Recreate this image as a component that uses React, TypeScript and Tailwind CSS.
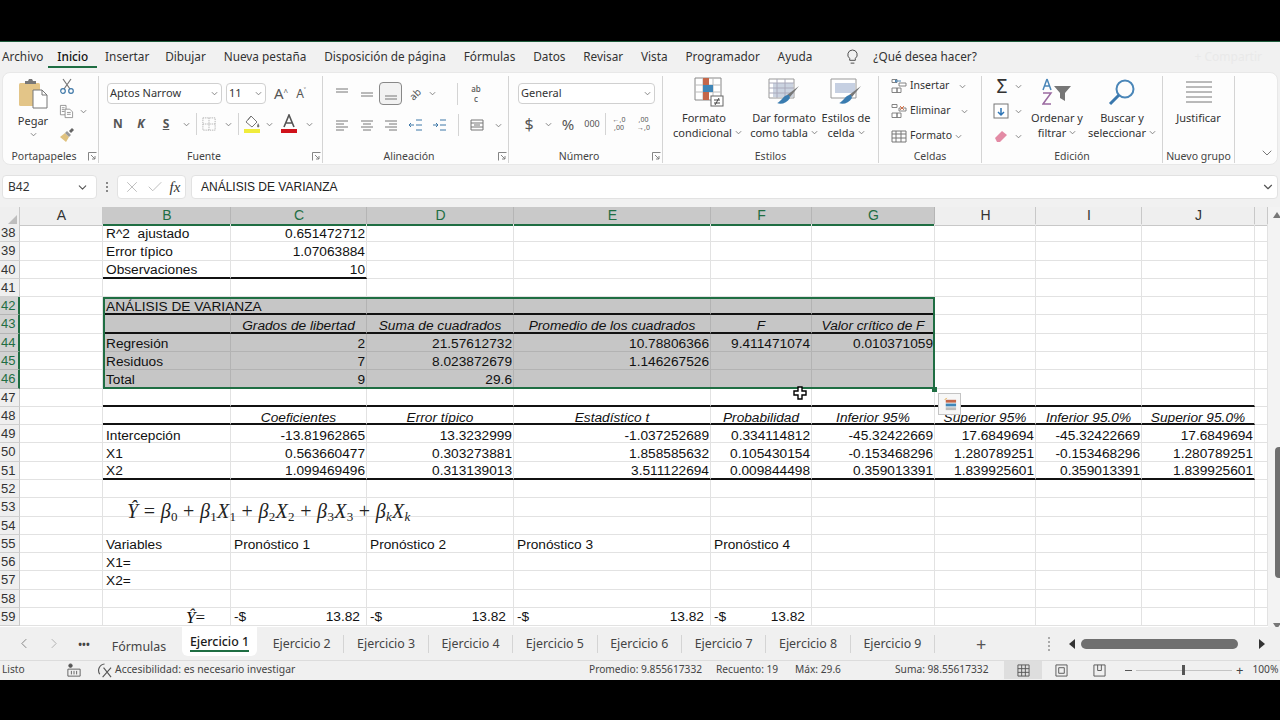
import React from "react";
import { X, Check, ChevronDown } from "lucide-react";

const cols = ["A", "B", "C", "D", "E", "F", "G", "H", "I", "J", "K"];
const colWidths = "grid-cols-[20px_83px_128px_136px_147px_197px_101px_123px_101px_106px_113px_13px]";

type Cell = { t: React.ReactNode; a?: "l" | "r" | "c"; i?: boolean };
const r = (t: React.ReactNode): Cell => ({ t, a: "r" });
const h = (t: string): Cell => ({ t, a: "c", i: true });
const l = (t: React.ReactNode): Cell => ({ t, a: "l" });

const money = (pad: string) => (
  <span className={`flex w-full justify-between ${pad}`}>
    <span>-$</span>
    <span>13.82</span>
  </span>
);

const data: Record<number, Record<string, Cell>> = {
  38: { B: l("R^2  ajustado"), C: r("0.651472712") },
  39: { B: l("Error típico"), C: r("1.07063884") },
  40: { B: l("Observaciones"), C: r("10") },
  42: { B: l("ANÁLISIS DE VARIANZA") },
  43: { C: h("Grados de libertad"), D: h("Suma de cuadrados"), E: h("Promedio de los cuadrados"), F: h("F"), G: h("Valor crítico de F") },
  44: { B: l("Regresión"), C: r("2"), D: r("21.57612732"), E: r("10.78806366"), F: r("9.411471074"), G: r("0.010371059") },
  45: { B: l("Residuos"), C: r("7"), D: r("8.023872679"), E: r("1.146267526") },
  46: { B: l("Total"), C: r("9"), D: r("29.6") },
  48: { C: h("Coeficientes"), D: h("Error típico"), E: h("Estadístico t"), F: h("Probabilidad"), G: h("Inferior 95%"), H: h("Superior 95%"), I: h("Inferior 95.0%"), J: h("Superior 95.0%") },
  49: { B: l("Intercepción"), C: r("-13.81962865"), D: r("13.3232999"), E: r("-1.037252689"), F: r("0.334114812"), G: r("-45.32422669"), H: r("17.6849694"), I: r("-45.32422669"), J: r("17.6849694") },
  50: { B: l("X1"), C: r("0.563660477"), D: r("0.303273881"), E: r("1.858585632"), F: r("0.105430154"), G: r("-0.153468296"), H: r("1.280789251"), I: r("-0.153468296"), J: r("1.280789251") },
  51: { B: l("X2"), C: r("1.099469496"), D: r("0.313139013"), E: r("3.511122694"), F: r("0.009844498"), G: r("0.359013391"), H: r("1.839925601"), I: r("0.359013391"), J: r("1.839925601") },
  55: { B: l("Variables"), C: l("Pronóstico 1"), D: l("Pronóstico 2"), E: l("Pronóstico 3"), F: l("Pronóstico 4") },
  56: { B: l("X1=") },
  57: { B: l("X2=") },
  59: {
    B: { t: <span className="mr-[24px] font-['Liberation_Serif',serif] text-[17px] leading-[17px]"><i>Ŷ</i>=</span>, a: "r" },
    C: l(money("pr-[6px]")),
    D: l(money("pr-[7px]")),
    E: l(money("pr-[6px]")),
    F: l(money("pr-[6px]")),
  },
};

const thick: Record<number, string[]> = {
  40: ["B", "C"],
  42: ["B", "C", "D", "E", "F", "G"],
  43: ["B", "C", "D", "E", "F", "G"],
  47: ["B", "C", "D", "E", "F", "G", "H", "I", "J"],
  48: ["B", "C", "D", "E", "F", "G", "H", "I", "J"],
  51: ["B", "C", "D", "E", "F", "G", "H", "I", "J"],
};

const selCols = ["B", "C", "D", "E", "F", "G"];
const rowNums = Array.from({ length: 22 }, (_, i) => 38 + i);
const sheets = ["Ejercicio 2", "Ejercicio 3", "Ejercicio 4", "Ejercicio 5", "Ejercicio 6", "Ejercicio 7", "Ejercicio 8", "Ejercicio 9"];
const tabs = ["Insertar", "Dibujar", "Nueva pestaña", "Disposición de página", "Fórmulas", "Datos", "Revisar", "Vista", "Programador", "Ayuda"];

const rowPad = (n: number) => {
  if (n === 43) return "pt-[5px]";
  if (n === 48) return "pt-[7px]";
  if (n === 49) return "pt-[4px]";
  if (n === 59) return "pt-px";
  return "pt-[3px]";
};

const Chev = ({ className = "" }: { className?: string }) => (
  <svg viewBox="0 0 8 5" className={`h-[5px] w-[7px] shrink-0 ${className}`} fill="none" stroke="#777" strokeWidth="1">
    <path d="M1 1l3 3 3-3" />
  </svg>
);

const Launcher = () => (
  <svg viewBox="0 0 9 9" className="absolute right-[1px] top-[3px] h-[9px] w-[9px]" fill="none" stroke="#777" strokeWidth="0.9">
    <path d="M.5 8.5v-8h8M3 3l4 4M7 4v3H4" />
  </svg>
);

const Group = ({ w, label, launcher, children }: { w: string; label: string; launcher?: boolean; children: React.ReactNode }) => (
  <div className={`flex h-[87px] shrink-0 flex-col border-r border-[#d4d4d4] ${w}`}>
    <div className="h-[73px]">{children}</div>
    <div className={`relative h-[14px] text-center text-[10.5px] leading-[14px] text-[#444] ${launcher ? "pr-[13px]" : ""}`}>
      {label}
      {launcher && <Launcher />}
    </div>
  </div>
);

const Lines = ({ d, stroke = "#777" }: { d: string; stroke?: string }) => (
  <svg viewBox="0 0 16 16" className="h-[16px] w-[16px]" fill="none" stroke={stroke} strokeWidth="1">
    <path d={d} />
  </svg>
);

const Slot = ({ w, children }: { w: string; children?: React.ReactNode }) => (
  <div className={`flex h-full shrink-0 items-center justify-center ${w}`}>{children}</div>
);

const Sep = ({ className = "" }: { className?: string }) => <div className={`h-[22px] w-px shrink-0 bg-[#d4d4d4] ${className}`} />;

const BigBtn = ({ w, icon, lines }: { w: string; icon: React.ReactNode; lines: React.ReactNode[] }) => (
  <div className={`flex shrink-0 flex-col items-center ${w}`}>
    <div className="flex h-[32px] items-center justify-center">{icon}</div>
    <div className="mt-[2px] text-center text-[11px] leading-[15px] text-[#333]">
      {lines.map((x, i) => (
        <div key={i} className="flex items-center justify-center gap-[3px] whitespace-nowrap">{x}</div>
      ))}
    </div>
  </div>
);

const PasteIcon = () => (
  <svg viewBox="0 0 30 32" className="h-[32px] w-[30px]">
    <rect x="1" y="5" width="21" height="23" rx="1.5" fill="#e3c588" />
    <path d="M7 6V3h3l1-2h3l1 2h3v3z" fill="#777" />
    <path d="M15 12h9l5 5v13H15z" fill="#fff" stroke="#777" />
    <path d="M24 12v5h5" fill="none" stroke="#777" />
  </svg>
);
const CutIcon = () => (
  <svg viewBox="0 0 16 16" className="h-[16px] w-[16px]" fill="none" strokeWidth="1.2">
    <path d="M4 1l7 10M12 1L5 11" stroke="#777" />
    <circle cx="4" cy="13" r="2.3" stroke="#3f78a8" />
    <circle cx="12" cy="13" r="2.3" stroke="#3f78a8" />
  </svg>
);
const CopyIcon = () => (
  <svg viewBox="0 0 16 16" className="h-[15px] w-[15px]" fill="#fff" stroke="#888" strokeWidth="0.9">
    <path d="M1.5 1.5h6v10h-6zM3 4h3M3 6h3M3 8h3" />
    <path d="M6.5 5.5h5l3 3v6h-8zM8.5 9h4M8.5 11h4" />
  </svg>
);
const BrushIcon = () => (
  <svg viewBox="0 0 16 16" className="h-[16px] w-[16px]">
    <path d="M1 10l5-4 4 4-3 5z" fill="#e0c27f" />
    <path d="M6 6l2-2 4 4-2 2z" fill="#999" />
    <path d="M10 4l3-3 2 2-3 3z" fill="#666" />
  </svg>
);
const FillIcon = () => (
  <svg viewBox="0 0 18 20" className="h-[20px] w-[18px]">
    <path d="M8 2l6 6-5 5-6-5z" fill="#fff" stroke="#777" />
    <path d="M5 6l3-4" stroke="#777" fill="none" />
    <path d="M15 9c1 2 2 3 1 4s-2 0-2-1z" fill="#777" />
    <rect x="1" y="15" width="16" height="4" fill="#f0ec3c" />
  </svg>
);
const FontColorIcon = () => (
  <svg viewBox="0 0 18 20" className="h-[20px] w-[18px]">
    <path d="M4 13L9 1l5 12M6 9h6" fill="none" stroke="#555" strokeWidth="1.6" />
    <rect x="1" y="15" width="16" height="4" fill="#d0121b" />
  </svg>
);
const BordersIcon = () => (
  <svg viewBox="0 0 16 16" className="h-[14px] w-[14px]" fill="none" stroke="#aaa" strokeDasharray="1.5 1">
    <path d="M1 1h14v14H1zM8 1v14M1 8h14" />
  </svg>
);
const CondIcon = () => (
  <svg viewBox="0 0 30 30" className="ml-[10px] h-[30px] w-[30px]">
    <path d="M1 1h26v22H1z" fill="#fff" stroke="#888" />
    <path d="M1 8h26M1 15h26M9 1v22M19 1v22" stroke="#bbb" />
    <rect x="9" y="1" width="6" height="7" fill="#c4674a" />
    <rect x="9" y="8" width="10" height="7" fill="#3f86b8" />
    <rect x="9" y="15" width="6" height="8" fill="#c4674a" />
    <rect x="17" y="19" width="12" height="10" fill="#fff" stroke="#666" />
    <path d="M20 23h6M20 26h6M25 21l-4 7" stroke="#444" fill="none" />
  </svg>
);
const TableIcon = () => (
  <svg viewBox="0 0 32 30" className="h-[30px] w-[32px]">
    <path d="M1 2h25v19H1z" fill="#fff" stroke="#999" />
    <rect x="5" y="6" width="20" height="14" fill="#cbd3e0" />
    <path d="M1 6h25M1 11h25M1 16h25M9 2v19M17 2v19" stroke="#aab" />
    <path d="M31 9L22 20l-3-2z" fill="#777" />
    <path d="M21 18c-4 0-5 2-7 4-2 2-4 4-5 4 4 2 10 0 13-5z" fill="#3a7cb0" />
  </svg>
);
const CellStyleIcon = () => (
  <svg viewBox="0 0 32 30" className="h-[30px] w-[32px]">
    <path d="M1 2h25v19H1z" fill="#fff" stroke="#999" />
    <rect x="5" y="6" width="20" height="10" fill="#c6d0e2" />
    <path d="M31 9L22 20l-3-2z" fill="#777" />
    <path d="M21 18c-4 0-5 2-7 4-2 2-4 4-5 4 4 2 10 0 13-5z" fill="#3a7cb0" />
  </svg>
);
const SortIcon = () => (
  <svg viewBox="0 0 30 28" className="h-[28px] w-[30px]">
    <path d="M5 1L1 12M5 1l4 11M2.5 8h5" stroke="#4a86b8" strokeWidth="1.5" fill="none" />
    <path d="M1 15h8L1 26h8" stroke="#9a6aa0" strokeWidth="1.5" fill="none" />
    <path d="M12 8h17l-6 7v8l-5-3v-5z" fill="#777" />
  </svg>
);
const SearchIcon = () => (
  <svg viewBox="0 0 28 28" className="h-[28px] w-[28px]" fill="none">
    <circle cx="17" cy="11" r="8.5" stroke="#4a86b8" strokeWidth="2" />
    <path d="M11 17L2 26" stroke="#3a78ad" strokeWidth="3" />
  </svg>
);
const JustifyIcon = () => (
  <svg viewBox="0 0 26 22" className="h-[22px] w-[26px]" fill="none" stroke="#777">
    <path d="M0 1h26M0 6h26M0 11h26M0 16h26M0 21h26" />
  </svg>
);

const CellsRow = ({ icon, label, chevMl }: { icon: React.ReactNode; label: string; chevMl: string }) => (
  <div className="flex h-[20px] items-center">
    {icon}
    <span className="ml-[3px] text-[10.5px] text-[#333]">{label}</span>
    <Chev className={chevMl} />
  </div>
);

const InsertIcon = ({ mark }: { mark: "in" | "x" }) => (
  <svg viewBox="0 0 16 16" className="h-[16px] w-[16px]" fill="#fff" stroke="#777" strokeWidth="0.9">
    <path d="M1 1.5h5v3H1zM1 10h5v4.5H1zM6 10h4v4.5H6zM8 5h7v3H8z" />
    {mark === "in" ? <path d="M10 3H4M6 1.5L4 3l2 1.5" stroke="#3a78ad" fill="none" /> : <path d="M9 3l4 4M13 3L9 7" stroke="#d2693c" fill="none" />}
  </svg>
);

const Ribbon = () => (
  <div className="mx-[2px] flex h-[93px] shrink-0 rounded-lg border border-[#e8e8e8] bg-[#fdfdfd] pt-[3px]">
    <Group w="w-[96px]" label="Portapapeles" launcher>
      <div className="flex">
        <div className="ml-[13px] flex w-[34px] flex-col items-center">
          <div className="mt-[2px]"><PasteIcon /></div>
          <div className="mt-[3px] text-[11px] leading-[15px] text-[#333]">Pegar</div>
          <Chev className="mt-[4px]" />
        </div>
        <div className="ml-[9px] flex flex-col items-start">
          <div className="flex h-[20px] items-center"><CutIcon /></div>
          <div className="mt-[5px] flex h-[20px] items-center"><CopyIcon /><Chev className="ml-[6px]" /></div>
          <div className="mt-[4px] flex h-[20px] items-center"><BrushIcon /></div>
        </div>
      </div>
    </Group>
    <Group w="w-[224px]" label="Fuente" launcher>
      <div className="ml-[8px] mt-[7px] flex h-[21px] items-center">
        <div className="flex h-full w-[115px] items-center justify-between rounded border border-[#d0d0d0] bg-white pl-[2px] pr-[3px] text-[11px] text-[#333]">Aptos Narrow<Chev /></div>
        <div className="ml-[4px] flex h-full w-[40px] items-center justify-between rounded border border-[#d0d0d0] bg-white pl-[2px] pr-[3px] text-[11px] text-[#333]">11<Chev /></div>
        <span className="ml-[8px] text-[15px] text-[#555]">A<sup className="text-[8px]">^</sup></span>
        <span className="ml-[8px] text-[12px] text-[#555]">A<sup className="text-[8px]">˅</sup></span>
      </div>
      <div className="ml-[8px] mt-[9px] flex h-[22px] items-center text-[#555]">
        <Slot w="w-[22px]"><span className="text-[12px] font-bold">N</span></Slot>
        <Slot w="w-[24px]"><span className="text-[12px] font-bold italic">K</span></Slot>
        <Slot w="w-[26px]"><span className="text-[12px] font-bold underline">S</span></Slot>
        <Slot w="w-[14px]"><Chev /></Slot>
        <Sep className="ml-[3px]" />
        <Slot w="w-[24px]"><BordersIcon /></Slot>
        <Slot w="w-[14px]"><Chev /></Slot>
        <Sep className="ml-[3px]" />
        <Slot w="w-[26px]"><FillIcon /></Slot>
        <Slot w="w-[8px]"><Chev /></Slot>
        <Slot w="w-[32px]"><FontColorIcon /></Slot>
        <Slot w="w-[8px]"><Chev /></Slot>
      </div>
    </Group>
    <Group w="w-[186px]" label="Alineación" launcher>
      <div className="ml-[7px] mt-[5px] flex h-[25px] items-center">
        <Slot w="w-[24px]"><Lines d="M2 3h12M2 6h12" /></Slot>
        <Slot w="w-[25px]"><Lines d="M2 7h12M2 10h12" /></Slot>
        <div className="flex h-[23px] w-[23px] shrink-0 items-center justify-center rounded border border-[#888] bg-[#f2f2f2]"><Lines d="M2 10h12M2 13h12" /></div>
        <Slot w="w-[26px]"><span className="-rotate-45 text-[10px] leading-[10px] text-[#555]">ab</span></Slot>
        <Slot w="w-[8px]"><Chev /></Slot>
        <Sep className="ml-[21px]" />
        <Slot w="w-[36px]"><span className="text-center text-[8px] font-medium leading-[10px] text-[#555]">ab<br />c</span></Slot>
      </div>
      <div className="ml-[7px] mt-[8px] flex h-[22px] items-center">
        <Slot w="w-[24px]"><Lines d="M2 4h12M2 7h8M2 10h12M2 13h8" /></Slot>
        <Slot w="w-[25px]"><Lines d="M2 4h12M4 7h8M2 10h12M4 13h8" /></Slot>
        <Slot w="w-[24px]"><Lines d="M2 4h12M6 7h8M2 10h12M6 13h8" /></Slot>
        <Slot w="w-[25px]"><Lines d="M8 3h6M8 13h6M8 8h6M6 8H1M3 6L1 8l2 2" stroke="#3f78a8" /></Slot>
        <Slot w="w-[24px]"><Lines d="M8 3h6M8 13h6M8 8h6M1 8h5M4 6l2 2-2 2" stroke="#3f78a8" /></Slot>
        <Sep className="ml-[6px]" />
        <Slot w="w-[36px]"><Lines d="M2 3h12v10H2zM2 6h12M2 10h12M5 8h6" /></Slot>
        <Chev />
      </div>
    </Group>
    <Group w="w-[154px]" label="Número" launcher>
      <div className="ml-[9px] mt-[7px] flex h-[21px] w-[137px] items-center justify-between rounded border border-[#d0d0d0] bg-white pl-[2px] pr-[3px] text-[11px] text-[#333]">General<Chev /></div>
      <div className="ml-[9px] mt-[9px] flex h-[22px] items-center text-[#555]">
        <Slot w="w-[22px]"><span className="text-[16px]">$</span></Slot>
        <Slot w="w-[16px]"><Chev /></Slot>
        <Slot w="w-[24px]"><span className="text-[15px]">%</span></Slot>
        <Slot w="w-[24px]"><span className="text-[9px]">000</span></Slot>
        <Sep className="ml-[1px]" />
        <Slot w="w-[26px]"><span className="text-center text-[7px] leading-[8px]">←,0<br />,00</span></Slot>
        <Slot w="w-[23px]"><span className="text-center text-[7px] leading-[8px]">,00<br />→,0</span></Slot>
      </div>
    </Group>
    <Group w="w-[216px]" label="Estilos">
      <div className="ml-[5px] flex">
        <BigBtn w="w-[72px]" icon={<CondIcon />} lines={["Formato", <><span className="ml-[7px]">condicional</span><Chev /></>]} />
        <BigBtn w="ml-[4px] w-[80px]" icon={<TableIcon />} lines={["Dar formato", <>como tabla<Chev /></>]} />
        <BigBtn w="ml-[1px] w-[42px]" icon={<CellStyleIcon />} lines={["Estilos de", <>celda<Chev /></>]} />
      </div>
    </Group>
    <Group w="w-[103px]" label="Celdas">
      <div className="ml-[12px] flex flex-col gap-[5px]">
        <CellsRow icon={<InsertIcon mark="in" />} label="Insertar" chevMl="ml-[10px]" />
        <CellsRow icon={<InsertIcon mark="x" />} label="Eliminar" chevMl="ml-[10px]" />
        <CellsRow icon={<Lines d="M1 3h14v11H1zM1 6h14M1 10h14M5 3v11M10 3v11" />} label="Formato" chevMl="ml-[3px]" />
      </div>
    </Group>
    <Group w="w-[181px]" label="Edición">
      <div className="flex">
        <div className="ml-[11px] flex w-[36px] shrink-0 flex-col gap-[5px]">
          <div className="flex h-[20px] items-center"><span className="w-[18px] text-center text-[19px] leading-[19px] text-[#333]">Σ</span><Chev className="ml-[4px]" /></div>
          <div className="flex h-[20px] items-center">
            <svg viewBox="0 0 16 16" className="h-[16px] w-[16px]"><rect x="1" y="1" width="14" height="14" fill="#fff" stroke="#777" /><path d="M8 5v7M5 9l3 3 3-3" stroke="#2e75b6" fill="none" strokeWidth="1.5" /></svg>
            <Chev className="ml-[6px]" />
          </div>
          <div className="flex h-[20px] items-center">
            <svg viewBox="0 0 16 16" className="h-[16px] w-[16px]"><path d="M2 10l7-7 5 4-7 7H4z" fill="#e38ba5" /></svg>
            <Chev className="ml-[6px]" />
          </div>
        </div>
        <BigBtn w="w-[56px]" icon={<SortIcon />} lines={["Ordenar y", <>filtrar<Chev /></>]} />
        <BigBtn w="ml-[2px] w-[70px]" icon={<SearchIcon />} lines={["Buscar y", <>seleccionar<Chev /></>]} />
      </div>
    </Group>
    <Group w="w-[72px]" label="Nuevo grupo">
      <BigBtn w="w-[71px]" icon={<JustifyIcon />} lines={["Justificar"]} />
    </Group>
    <div className="flex flex-1 items-end justify-end pb-[3px] pr-[2px]">
      <ChevronDown size={16} strokeWidth={1.2} color="#555" />
    </div>
  </div>
);

const Eq = () => (
  <div className="absolute left-[127px] top-[275px] z-[1] whitespace-pre font-['Liberation_Serif',serif] text-[20px] leading-[24px] tracking-[0.3px] text-[#222]">
    <i>Ŷ</i> = <i>β</i><sub className="text-[13px]">0</sub> + <i>β</i><sub className="text-[13px]">1</sub><i>X</i><sub className="text-[13px]">1</sub> + <i>β</i><sub className="text-[13px]">2</sub><i>X</i><sub className="text-[13px]">2</sub> + <i>β</i><sub className="text-[13px]">3</sub><i>X</i><sub className="text-[13px]">3</sub> + <i>β</i><sub className="text-[13px] italic">k</sub><i>X</i><sub className="text-[13px] italic">k</sub>
  </div>
);

const Sheet = () => (
  <div className="relative flex flex-1 overflow-hidden bg-white">
    <div className="w-[1268px] shrink-0">
      <div className={`grid h-[17px] ${colWidths} font-['Liberation_Sans',sans-serif] text-[14px] leading-[17px]`}>
        <div className="flex items-end justify-end border-r border-[#c8c8c8] bg-[#efefef] p-[2px]">
          <div className="h-0 w-0 border-b-[9px] border-l-[9px] border-b-[#bdbdbd] border-l-transparent" />
        </div>
        {cols.map((c) => {
          const sel = selCols.includes(c);
          return (
            <div
              key={c}
              className={`box-border border-r pl-px text-center ${sel ? "border-b-2 border-r-[#b5b5b5] border-b-[#1f6e43] bg-[#c9c9c9] text-[#1f6e43]" : "border-b border-r-[#c8c8c8] border-b-[#c8c8c8] bg-[#efefef] text-[#333]"}`}
            >
              {c === "K" ? "" : c}
            </div>
          );
        })}
      </div>
      <div className="relative">
        {rowNums.map((n) => {
          const selRow = n >= 42 && n <= 46;
          return (
            <div key={n} className={`grid h-[18.286px] grid-rows-[18.286px] ${colWidths} font-['Liberation_Sans',sans-serif] text-[13.7px] leading-[18px] text-[#111]`}>
              <div className={`box-border overflow-hidden border-b pl-[1px] text-[13px] ${selRow ? "border-r-2 border-r-[#1f6e43] border-b-[#b5b5b5] bg-[#d2d2d2] text-[#1f6e43]" : "border-r border-r-[#c8c8c8] border-b-[#d0d0d0] bg-[#efefef] text-[#333]"}`}>
                {n}
              </div>
              {cols.map((c) => {
                const cell = data[n]?.[c];
                const sel = selRow && selCols.includes(c);
                const isThick = thick[n]?.includes(c);
                return (
                  <div
                    key={c}
                    className={`relative box-border flex min-h-0 items-center whitespace-pre border-r ${rowPad(n)} ${sel ? "border-r-[#b3b3b3] bg-[#c6c6c6]" : "border-r-[#e2e2e2]"} ${isThick ? "border-b-2 border-b-[#111]" : sel ? "border-b border-b-[#b3b3b3]" : "border-b border-b-[#e2e2e2]"} ${cell ? "z-[1]" : ""} ${cell?.a === "r" ? "justify-end pr-px" : cell?.a === "c" ? "justify-center" : "justify-start pl-[3px]"} ${cell?.i ? "italic" : ""}`}
                  >
                    {cell?.t}
                  </div>
                );
              })}
            </div>
          );
        })}
        <Eq />
        {/* seleccion B42:G46 */}
        <div className="pointer-events-none absolute left-[103px] top-[73px] z-[2] h-[92px] w-[832px] border-2 border-[#1f6e43]" />
        <div className="absolute left-[932px] top-[163px] z-[3] h-[5px] w-[5px] bg-[#1f6e43]" />
        <svg viewBox="0 0 14 14" className="absolute left-[793px] top-[162px] z-[3] h-[14px] w-[14px]">
          <path d="M5 1h4v4h4v4H9v4H5V9H1V5h4z" fill="#fff" stroke="#000" strokeWidth="1.4" />
        </svg>
        <div className="absolute left-[938px] top-[169px] z-[3] flex h-[22px] w-[23px] items-center justify-center border border-[#c4c4c4] bg-[#f7f7f7]">
          <svg viewBox="0 0 16 16" className="h-[15px] w-[15px]">
            <path d="M3 3l2-2" stroke="#e0a030" fill="none" />
            <rect x="4" y="3" width="11" height="3" fill="#c4674a" />
            <rect x="4" y="7" width="11" height="3" fill="#3f86b8" />
            <rect x="4" y="11" width="11" height="3" fill="#bbb" />
          </svg>
        </div>
      </div>
    </div>
    <div className="relative flex-1 bg-[#f3f3f3]">
      <div className="absolute left-[5px] top-[5px] h-0 w-0 border-b-[6px] border-l-[4px] border-r-[4px] border-b-[#777] border-l-transparent border-r-transparent" />
      <div className="absolute left-[7px] top-[240px] h-[131px] w-[5px] rounded-l bg-[#6f6f6f]" />
      <div className="absolute bottom-[-2px] left-[5px] h-0 w-0 border-l-[4px] border-r-[4px] border-t-[6px] border-l-transparent border-r-transparent border-t-[#777]" />
    </div>
  </div>
);

const SheetTabs = () => (
  <div className="flex h-[33px] shrink-0 items-center bg-[#f0f0f0] text-[12.4px] text-[#444]">
    <div className="ml-[18px] w-[12px] text-center text-[#888]"><svg viewBox="0 0 8 12" className="mx-auto h-[11px] w-[7px]" fill="none" stroke="#777"><path d="M6 1L1 6l5 5" /></svg></div>
    <div className="ml-[17px] w-[12px]"><svg viewBox="0 0 8 12" className="mx-auto h-[11px] w-[7px]" fill="none" stroke="#aaa"><path d="M2 1l5 5-5 5" /></svg></div>
    <div className="ml-[19px] w-[12px] text-center text-[10px] font-bold leading-[10px]">•••</div>
    <div className="ml-[10px] mt-[8px] w-[78px] text-center">Fórmulas</div>
    <div className="ml-[4px] flex h-[29px] w-[75px] flex-col items-center self-start rounded-b-md bg-white pt-[5px] font-medium text-[#1b1b1b]">
      <span className="border-b-2 border-[#1f6e43] pt-px leading-[17px]">Ejercicio 1</span>
    </div>
    <div className="ml-[3px] flex">
      {sheets.map((s) => (
        <div key={s} className="w-[84.4px] border-r border-[#d4d4d4] text-center leading-[18px]">{s}</div>
      ))}
    </div>
    <div className="ml-[39px] w-[14px] text-center text-[18px] leading-[18px] text-[#555]">+</div>
    <div className="ml-[60px] h-[14px] w-[2px] border-l-2 border-dotted border-[#aaa]" />
    <div className="ml-[19px] h-0 w-0 border-b-[5px] border-r-[6px] border-t-[5px] border-b-transparent border-r-[#333] border-t-transparent" />
    <div className="ml-[6px] h-[10px] w-[157px] rounded-full bg-[#6f6f6f]" />
    <div className="ml-[21px] h-0 w-0 border-b-[5px] border-l-[6px] border-t-[5px] border-b-transparent border-l-[#333] border-t-transparent" />
  </div>
);

const StatusBar = () => (
  <div className="flex h-[20px] shrink-0 items-center border-t border-[#dcdcdc] bg-[#f0f0f0] pb-px text-[10.2px] text-[#444]">
    <span className="ml-[2px] w-[63px]">Listo</span>
    <svg viewBox="0 0 16 16" className="ml-[2px] h-[14px] w-[14px]" fill="none" stroke="#555">
      <circle cx="4" cy="3" r="2" fill="#555" />
      <path d="M1 7h14v8H1zM5 9v4M8 9v4M11 9v4" />
    </svg>
    <svg viewBox="0 0 16 16" className="ml-[16px] h-[15px] w-[15px]" fill="none" stroke="#555" strokeWidth="1.2">
      <path d="M8 1a7 7 0 0 0-5 11M7 5l8 10M15 5L6 15" />
    </svg>
    <span className="ml-[3px] w-[474px] text-[10.4px]">Accesibilidad: es necesario investigar</span>
    <span className="w-[127px]">Promedio: 9.855617332</span>
    <span className="w-[79px]">Recuento: 19</span>
    <span className="w-[100px]">Máx: 29.6</span>
    <span className="w-[109px]">Suma: 98.55617332</span>
    <div className="flex h-full w-[38px] items-center justify-center bg-[#dedede]">
      <svg viewBox="0 0 14 14" className="h-[13px] w-[13px]" fill="none" stroke="#555"><path d="M1 1h12v12H1zM1 5h12M1 9h12M5 1v12M9 1v12" /></svg>
    </div>
    <div className="flex w-[38px] justify-center">
      <svg viewBox="0 0 14 14" className="h-[13px] w-[13px]" fill="none" stroke="#555"><path d="M1 1h12v12H1zM4 4h6v6H4z" /></svg>
    </div>
    <div className="flex w-[38px] justify-center">
      <svg viewBox="0 0 14 14" className="h-[13px] w-[13px]" fill="none" stroke="#555"><path d="M1 1h12v12H1zM5 1v6h4V1" /></svg>
    </div>
    <span className="ml-[7px] h-px w-[7px] bg-[#555]" />
    <div className="relative ml-[4px] flex h-[10px] w-[96px] items-center">
      <div className="h-px w-full bg-[#c4c4c4]" />
      <div className="absolute left-[46px] h-[10px] w-[3px] bg-[#555]" />
    </div>
    <span className="ml-[4px] text-[13px] leading-[13px]">+</span>
    <span className="ml-[9px] whitespace-nowrap">100%</span>
  </div>
);

export default function App() {
  return (
    <div className="h-[720px] w-[1280px] overflow-hidden bg-black font-['Noto_Sans',sans-serif]">
      <div className="mt-[41px] flex h-[639px] flex-col border-t border-[#1f5c3c] bg-[#f1f1f1]">
        <div className="flex h-[30px] shrink-0 items-center text-[11.8px] text-[#333]">
          <span className="ml-[2px]">Archivo</span>
          <span className="relative ml-[14px] w-[30px] whitespace-nowrap font-medium text-[#111]">
            Inicio
            <span className="absolute -bottom-[2px] left-[-9px] h-[2px] w-[49px] bg-[#1f6e43]" />
          </span>
          {tabs.map((t, i) => (
            <span key={t} className={i === 1 ? "ml-[15.8px]" : "ml-[17.8px]"}>{t}</span>
          ))}
          <svg viewBox="0 0 16 18" className="ml-[33px] h-[17px] w-[15px]" fill="none" stroke="#444"><path d="M8 1a5 5 0 0 0-3 9v2h6v-2a5 5 0 0 0-3-9zM6 15h4" /></svg>
          <span className="ml-[13px]">¿Qué desea hacer?</span>
          <span className="ml-auto mr-[18px] text-[12px] text-[#e9e9e9]">+ Compartir</span>
        </div>
        <Ribbon />
        <div className="mt-[10px] flex h-[24px] shrink-0 items-stretch px-[2px]">
          <div className="flex w-[95px] items-center justify-between rounded border border-[#e2e2e2] bg-white pl-[5px] pr-[7px] text-[12px] text-[#333]">B42<ChevronDown size={13} color="#555" /></div>
          <div className="flex w-[20px] flex-col items-center justify-center gap-[2px]">
            <span className="h-[2px] w-[2px] bg-[#888]" />
            <span className="h-[2px] w-[2px] bg-[#888]" />
            <span className="h-[2px] w-[2px] bg-[#888]" />
          </div>
          <div className="flex w-[69px] items-center justify-around rounded border border-[#e2e2e2] bg-white px-[2px]">
            <X size={18} strokeWidth={1} color="#aaa" />
            <Check size={18} strokeWidth={1} color="#aaa" />
            <span className="font-['Liberation_Serif',serif] text-[15px] italic text-[#333]">fx</span>
          </div>
          <div className="ml-[5px] flex flex-1 items-center justify-between rounded border border-[#e2e2e2] bg-white pl-[9px] pr-[2px] font-['Liberation_Sans',sans-serif] text-[12px] text-[#222]">
            ANÁLISIS DE VARIANZA
            <ChevronDown size={14} color="#555" />
          </div>
        </div>
        <div className="h-[8px] shrink-0" />
        <Sheet />
        <SheetTabs />
        <StatusBar />
      </div>
    </div>
  );
}
